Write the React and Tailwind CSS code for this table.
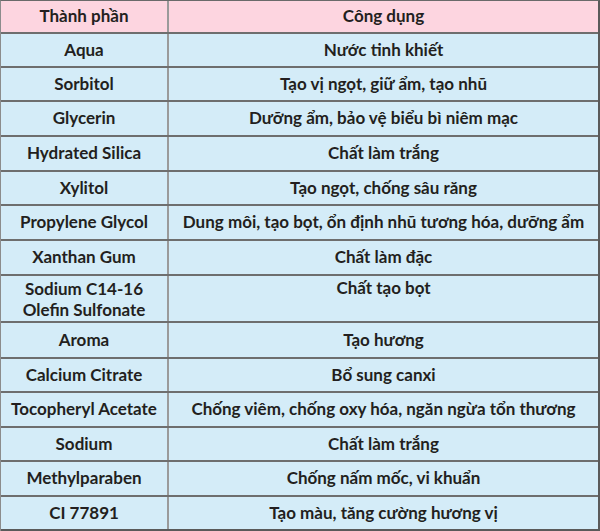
const rows = [
  ["Aqua", "Nước tinh khiết", "h-[34px]"],
  ["Sorbitol", "Tạo vị ngọt, giữ ẩm, tạo nhũ", "h-[34px]"],
  ["Glycerin", "Dưỡng ẩm, bảo vệ biểu bì niêm mạc", "h-[35px]"],
  ["Hydrated Silica", "Chất làm trắng", "h-[35px]"],
  ["Xylitol", "Tạo ngọt, chống sâu răng", "h-[34px]"],
  ["Propylene Glycol", "Dung môi, tạo bọt, ổn định nhũ tương hóa, dưỡng ẩm", "h-[35px]"],
  ["Xanthan Gum", "Chất làm đặc", "h-[35px]"],
  ["Sodium C14-16\nOlefin Sulfonate", "Chất tạo bọt", "h-[47px]"],
  ["Aroma", "Tạo hương", "h-[36px]"],
  ["Calcium Citrate", "Bổ sung canxi", "h-[34px]"],
  ["Tocopheryl Acetate", "Chống viêm, chống oxy hóa, ngăn ngừa tổn thương", "h-[35px]"],
  ["Sodium", "Chất làm trắng", "h-[34px]"],
  ["Methylparaben", "Chống nấm mốc, vi khuẩn", "h-[35px]"],
  ["CI 77891", "Tạo màu, tăng cường hương vị", "h-[34px]"],
];

export default function App() {
  return (
    <div
      className="w-[600px] h-[531px] bg-[#d4ecf8] border-t border-l border-r-2 border-t-[#6a6a6a] border-l-[#8c8c8c] border-r-[#5a5a5a] text-[#231f20] font-bold text-[17px] leading-[20px]"
      style={{ fontFamily: "Lato, 'Open Sans', sans-serif" }}
    >
      <div className="flex h-[33px] bg-[#fdd5e0] border-b-2 border-[#6e6e6e]">
        <div className="w-[168px] flex items-center justify-center pb-[1px] border-r-2 border-[#9a9a9a]">Thành phần</div>
        <div className="flex-1 flex items-center justify-center pb-[1px]">Công dụng</div>
      </div>
      {rows.map(([a, b, h], i) => (
        <div key={i} className={`flex ${h} border-b-2 ${i === rows.length - 1 ? "border-[#5a5a5a]" : "border-[#6e6e6e]"}`}>
          <div className={`w-[168px] flex items-center justify-center text-center whitespace-pre-line border-r-2 border-[#9a9a9a] ${i === 7 ? "leading-[21px]" : "pb-[1px]"}`}>
            {a}
          </div>
          <div className={`flex-1 flex justify-center text-center ${i === 7 ? "items-start pt-[2px]" : "items-center pb-[1px]"}`}>{b}</div>
        </div>
      ))}
    </div>
  );
}
